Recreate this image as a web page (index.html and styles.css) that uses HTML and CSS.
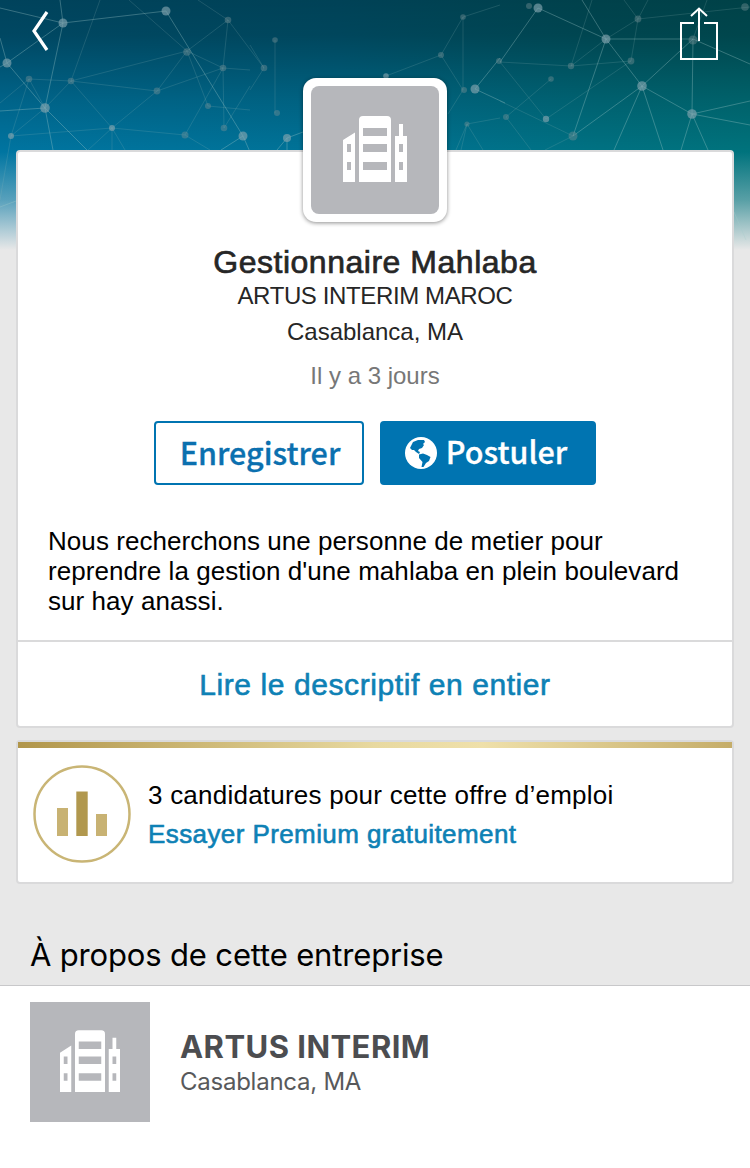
FILE: index.html
```html
<!DOCTYPE html>
<html lang="fr">
    <head>
        <meta charset="UTF-8" />
        <meta name="viewport" content="width=device-width, initial-scale=1.0" />
        <title>Gestionnaire Mahlaba</title>
        <link rel="stylesheet" href="styles.css">
    </head>
    <body>
        <svg class="symbols" aria-hidden="true">
            <symbol id="building" viewBox="0 0 128 128">
                <path
                    fill-rule="evenodd"
                    d="M32 54L44 46.5V96H32ZM36 58V66H40V58ZM36 76V84H40V76ZM48 34Q48 30 52 30H76Q80 30 80 34V96H48ZM52 42V50H76V42ZM52 58V66H76V58ZM52 76V84H76V76ZM84 50H88V38H92V50H96V96H84ZM88 58V66H92V58ZM88 76V84H92V76Z"
                />
            </symbol>
        </svg>

        <div class="banner">
            <svg class="network" viewBox="0 0 750 250">
                <g class="lines bright">
                    <path d="M0 8L63 23L166 11L243 136L221 150M60 0L63 23L7 63L45 108L53 150M63 23L45 108L87 150M0 111L45 108M7 63L0 38M7 63L0 67M0 207L16 201M243 136L257 168M287 138L303 132M287 138L277 150M287 138V150" />
                    <path d="M500 62L538 8L606 39L693 39L692 114L642 86L606 39L582 0M642 86L693 39L750 64M642 86L614 150M642 86L663 150M642 86L573 136L606 39M692 114L750 101M692 114L750 125M692 114L681 150M692 114L708 150M475 89L500 58M475 89L505 103M734 212L746 240" />
                </g>
                <g class="lines">
                    <path d="M0 103L29 79L71 81L100 0M29 79L11 136L0 200M29 79L45 108M11 136L45 108L71 81L112 128L185 135L210 150M11 136L112 128V150M71 81L187 51L129 0M71 81L157 91L223 68L250 70M157 91L187 51L228 20L198 0M157 91L112 128L88 150M187 51L223 68L224 128L250 86M228 20L223 68M228 20L264 68M223 68L185 135M187 51L208 106L250 110M112 128L125 150" />
                    <path d="M264 68L250 90M264 68L250 45M275 40V113M386 76L441 55L463 17L500 5M463 17V90L441 55M463 90L448 114M467 124L500 118M467 124L456 150M467 124L461 150M467 124L483 150M500 62L571 66L631 61L638 19L750 7M571 66L606 39L638 19L624 0M571 66L592 0M500 62L546 119L631 61M500 101L573 136L545 150M506 117L531 150M506 117L551 79M638 19L648 0M693 39L707 0" />
                </g>
                <g class="dots bright">
                    <circle cx="63" cy="23" r="4.5" /><circle cx="166" cy="11" r="4.5" /><circle cx="7" cy="63" r="4.5" />
                    <circle cx="45" cy="108" r="4.8" /><circle cx="243" cy="136" r="4.5" /><circle cx="287" cy="138" r="4" />
                    <circle cx="475" cy="89" r="4.5" /><circle cx="538" cy="8" r="4.5" /><circle cx="606" cy="39" r="4.5" />
                    <circle cx="642" cy="86" r="4.8" /><circle cx="692" cy="114" r="4.8" /><circle cx="546" cy="119" r="3.2" />
                    <circle cx="11" cy="136" r="3" /><circle cx="112" cy="128" r="3" /><circle cx="386" cy="76" r="2.8" />
                </g>
                <g class="dots">
                    <circle cx="29" cy="79" r="3.3" /><circle cx="71" cy="81" r="3.3" /><circle cx="157" cy="91" r="3.4" />
                    <circle cx="187" cy="52" r="3.8" /><circle cx="228" cy="20" r="3.3" /><circle cx="223" cy="68" r="3.3" />
                    <circle cx="224" cy="128" r="3.3" /><circle cx="185" cy="135" r="3.5" /><circle cx="208" cy="106" r="3" />
                    <circle cx="264" cy="68" r="3.3" /><circle cx="275" cy="40" r="2.8" /><circle cx="277" cy="113" r="3" />
                    <circle cx="441" cy="55" r="3" /><circle cx="463" cy="17" r="2.8" /><circle cx="464" cy="90" r="3" />
                    <circle cx="467" cy="124" r="2.6" /><circle cx="499" cy="61" r="3" /><circle cx="529" cy="6" r="3" />
                    <circle cx="571" cy="66" r="3.2" /><circle cx="631" cy="61" r="3.4" /><circle cx="638" cy="19" r="3.4" />
                    <circle cx="551" cy="79" r="2.8" /><circle cx="506" cy="117" r="3" /><circle cx="745" cy="7" r="3.8" />
                    <circle cx="693" cy="40" r="4.5" /><circle cx="573" cy="136" r="4.5" />
                </g>
            </svg>
        </div>

        <header class="topbar">
            <svg class="back" viewBox="0 0 20 42"><path d="M16 2L3 21L16 40" /></svg>
            <svg class="share" viewBox="0 0 40 54"><path d="M15 16H2V52H38V16H25M20 34V2M12 9L20 1.5L28 9" /></svg>
        </header>

        <main>
            <section class="card job">
                <div class="logo">
                    <svg><use href="#building" /></svg>
                </div>
                <h1 class="job-title">Gestionnaire Mahlaba</h1>
                <p class="company">ARTUS INTERIM MAROC</p>
                <p class="location">Casablanca, MA</p>
                <p class="posted">Il y a 3 jours</p>
                <div class="actions">
                    <button class="btn save">Enregistrer</button>
                    <button class="btn apply">
                        <svg class="globe" viewBox="0 0 32 32">
                            <circle cx="16" cy="16" r="16" />
                            <path d="M6 9L8 5L13 3L19 3L20 5L18 7L19 8L17 11L14 12L13 14L15 15L14 17L11 15L9 13L7 13L5 11Z" />
                            <path d="M14 17.500L18 16.500L22 18L25.500 20L24 24L21 26L18.500 30L16.500 30L17.500 25L14 21Z" />
                        </svg>
                        <span>Postuler</span>
                    </button>
                </div>
                <p class="description">Nous recherchons une personne de metier pour reprendre la gestion d'une mahlaba en plein boulevard sur hay anassi.</p>
                <a class="read-more" href="#"><span>Lire le descriptif en entier</span></a>
            </section>

            <section class="card premium">
                <svg class="stats" viewBox="0 0 98 98">
                    <circle cx="49" cy="49" r="47.5" />
                    <path class="side" d="M24 43H35V71H24ZM63 49H74V71H63Z" />
                    <path class="middle" d="M43.300 26.500H54.700V71H43.300Z" />
                </svg>
                <div>
                    <p class="applicants">3 candidatures pour cette offre d’emploi</p>
                    <a class="try-premium" href="#">Essayer Premium gratuitement</a>
                </div>
            </section>

            <h2 class="about-title"><span>À propos de cette entreprise</span></h2>
            <section class="about">
                <svg class="about-logo"><use href="#building" /></svg>
                <div>
                    <h3 class="about-name">ARTUS INTERIM</h3>
                    <p class="about-location">Casablanca, MA</p>
                </div>
            </section>
        </main>
    </body>
</html>
```

FILE: styles.css
```css
* {
    margin: 0;
    padding: 0;
    box-sizing: border-box;
}

body {
    position: relative;
    height: 1168px;
    overflow: hidden;
    background: #e8e8e8;
    color: #000;
    font-family: "Liberation Sans", Arial, sans-serif;
}

a {
    text-decoration: none;
}

.symbols {
    display: none;
}

/* banner behind the top bar and the job card */
.banner {
    position: absolute;
    z-index: -1;
    top: 0;
    left: 0;
    width: 750px;
    height: 250px;
    background:
        linear-gradient(rgba(232, 232, 232, 0) 152px, rgba(232, 232, 232, 0.38) 200px, #e8e8e8 250px),
        linear-gradient(rgba(0, 0, 0, 0.44), rgba(0, 0, 0, 0.4) 35px, rgba(0, 0, 0, 0.17) 100px, rgba(0, 0, 0, 0.02) 152px),
        linear-gradient(90deg, #0077a4, #00759a 45%, #007485 80%, #00757f);
}

.network {
    display: block;
    width: 750px;
    height: 250px;
}

.lines {
    fill: none;
    stroke: rgba(150, 185, 185, 0.24);
    stroke-width: 0.8;
}

.lines.bright {
    stroke: rgba(165, 205, 205, 0.42);
}

.dots {
    fill: rgba(120, 145, 150, 0.42);
}

.dots.bright {
    fill: rgba(130, 165, 175, 0.65);
}

.topbar {
    display: flex;
    justify-content: space-between;
    align-items: flex-start;
    height: 150px;
    padding: 7px 31px 0;
}

.topbar svg {
    fill: none;
    stroke: #fff;
    stroke-width: 2;
}

.topbar .back {
    width: 20px;
    height: 42px;
    margin-top: 3px;
    stroke-width: 3.2;
}

.share {
    width: 40px;
    height: 54px;
}

.card {
    margin: 0 16px;
    background: #fff;
    border: 2px solid #dadadb;
    border-radius: 4px;
}

.job {
    display: flex;
    flex-direction: column;
    align-items: center;
    height: 578px;
    color: #262626;
    text-align: center;
}

.logo {
    width: 144px;
    height: 144px;
    margin-top: -74px;
    padding: 8px;
    background: #fff;
    border-radius: 13px;
    box-shadow: 0 1px 4px rgba(0, 0, 0, 0.45);
}

.logo svg {
    display: block;
    width: 128px;
    height: 128px;
    background: #b6b7bb;
    border-radius: 8px;
    fill: #fff;
}

.job-title {
    margin-top: 22px;
    font-size: 32px;
    line-height: 36px;
    font-weight: 400;
    letter-spacing: 0.52px;
    -webkit-text-stroke: 0.7px;
}

.company,
.location,
.posted {
    font-size: 24px;
    line-height: 36px;
}

.company {
    margin-top: -2px;
    letter-spacing: -0.38px;
}

.posted {
    margin-top: 8px;
    color: #777;
}

.actions {
    display: flex;
    gap: 16px;
    margin-top: 27px;
}

.btn {
    display: flex;
    align-items: center;
    justify-content: center;
    height: 64px;
    border: 2px solid #0074b1;
    border-radius: 4px;
    font: 500 30.5px/58px "Noto Sans CJK SC", sans-serif;
    -webkit-text-stroke: 0.3px;
}

.save {
    width: 210px;
    padding-left: 2px;
    background: #fff;
    color: #0b70af;
}

.apply {
    width: 216px;
    gap: 9px;
    padding-right: 4px;
    background: #0074b1;
    color: #fff;
}

.btn,
.btn span {
    padding-bottom: 2px;
}

.globe {
    width: 32px;
    height: 32px;
    margin-top: 2px;
    fill: #fff;
}

.globe path {
    fill: #0074b1;
}

.description {
    align-self: stretch;
    margin-top: 41px;
    padding: 0 30px;
    color: #000;
    font-size: 26px;
    line-height: 30px;
    letter-spacing: 0.06px;
    text-align: left;
}

.read-more {
    align-self: stretch;
    margin-top: auto;
    height: 86px;
    border-top: 2px solid #dadadb;
    color: #0e81b5;
    font-size: 30px;
    line-height: 86px;
    letter-spacing: 0.58px;
    -webkit-text-stroke: 0.6px;
}

.premium {
    position: relative;
    display: flex;
    gap: 17px;
    height: 144px;
    margin-top: 12px;
    padding: 23px 15px;
    font-size: 26px;
    line-height: 38px;
}

.premium::before {
    content: "";
    position: absolute;
    top: 0;
    left: 0;
    right: 0;
    height: 6px;
    background: linear-gradient(90deg, #b1964b, #e8d9a0 50%, #efe0aa 65%, #c5ad69);
}

.stats {
    width: 98px;
    height: 98px;
    fill: none;
}

.stats circle {
    stroke: #c9b575;
    stroke-width: 2.5;
}

.stats .side {
    fill: #c8b273;
}

.stats .middle {
    fill: #b1984e;
}

.applicants {
    margin: 11px 0 1px;
    letter-spacing: 0.23px;
}

.try-premium {
    color: #0e81b5;
    letter-spacing: 0.41px;
    -webkit-text-stroke: 0.6px;
}

.about-title {
    height: 101px;
    padding: 51px 30px 0;
    font: 400 31px/40px Inter, sans-serif;
    letter-spacing: -0.16px;
}

.about {
    display: flex;
    gap: 30px;
    height: 183px;
    padding: 16px 30px;
    background: #fff;
    border-top: 1px solid #c8c8ca;
    font-family: Inter, sans-serif;
}

.about-logo {
    width: 120px;
    height: 120px;
    background: #b6b7bb;
    fill: #fff;
}

.about-name {
    margin-top: 25px;
    color: #4c4d50;
    font-size: 31px;
    line-height: 40px;
    letter-spacing: 0.45px;
}

.about-location {
    color: #58595b;
    font-size: 24px;
    line-height: 30px;
    letter-spacing: -0.25px;
}
```
